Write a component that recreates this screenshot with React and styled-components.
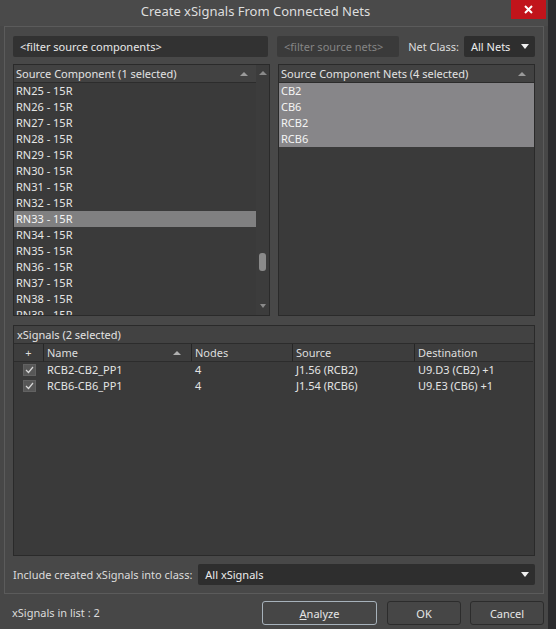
import React from 'react';
import styled, { createGlobalStyle } from 'styled-components';

const GlobalStyle = createGlobalStyle`
  html, body {
    margin: 0;
    padding: 0;
    background: #2b2b2d;
  }
  body {
    font-family: "Noto Sans", "Open Sans", sans-serif;
    font-size: 11px;
    color: #e4e4e4;
  }
  * { box-sizing: border-box; }
`;

const Window = styled.div`
  width: 548px;
  height: 629px;
  background: #474747;
  display: flex;
  flex-direction: column;
`;

const TitleBar = styled.div`
  height: 26px;
  display: flex;
  align-items: flex-start;
  background: #4a4a4a;
`;

const Title = styled.div`
  flex: 1;
  text-align: center;
  font-size: 13px;
  line-height: 23px;
  color: #dedede;
`;

const CloseButton = styled.div`
  width: 35px;
  height: 19px;
  margin-right: 2px;
  background: #c1141b;
  display: flex;
  align-items: center;
  justify-content: center;
`;

const Body = styled.div`
  margin: 0 4px;
  border: 1px solid #5b5b5b;
  background: #484848;
  padding: 9px 8px 8px 8px;
  display: flex;
  flex-direction: column;
`;

const FilterRow = styled.div`
  height: 21px;
  display: flex;
  align-items: center;
`;

const Input = styled.div`
  height: 21px;
  width: ${p => p.w}px;
  margin-right: ${p => p.mr || 0}px;
  background: ${p => p.dim ? '#3a3a3a' : '#323232'};
  color: ${p => p.dim ? '#858585' : '#e8e8e8'};
  border-radius: 2px;
  padding: 0 7px;
  line-height: 21px;
  white-space: nowrap;
`;

const Label = styled.span`
  color: #dcdcdc;
  white-space: nowrap;
  margin-right: ${p => p.mr || 0}px;
`;

const Select = styled.div`
  height: 21px;
  width: ${p => p.w ? `${p.w}px` : 'auto'};
  flex: ${p => p.w ? 'none' : 1};
  background: #2e2e2e;
  border-radius: 2px;
  display: flex;
  align-items: center;
  padding: 0 6px 0 7px;
  color: #ececec;
  span { flex: 1; }
`;

const DownTriangle = styled.i`
  width: 0;
  height: 0;
  border-left: 4px solid transparent;
  border-right: 4px solid transparent;
  border-top: 5px solid #f0f0f0;
`;

const UpTriangle = styled.i`
  width: 0;
  height: 0;
  margin-top: ${p => p.mt || 0}px;
  border-left: 4px solid transparent;
  border-right: 4px solid transparent;
  border-bottom: 4px solid ${p => p.c || '#9a9a9a'};
`;

const ListsGrid = styled.div`
  margin-top: 7px;
  height: 252px;
  display: grid;
  grid-template-columns: 1fr 1fr;
  gap: 8px;
`;

const ListPanel = styled.div`
  border: 1px solid #2a2a2a;
  background: #3a3a3a;
  display: flex;
  overflow: hidden;
`;

const ListMain = styled.div`
  flex: 1;
  display: flex;
  flex-direction: column;
  min-width: 0;
`;

const ListHeader = styled.div`
  height: 18px;
  flex: none;
  background: #424242;
  border-bottom: 1px solid #2c2c2c;
  display: flex;
  align-items: center;
  padding: 0 8px 0 2px;
  color: #e2e2e2;
  span { flex: 1; }
`;

const Row = styled.div`
  height: 16px;
  flex: none;
  line-height: 16px;
  padding-left: 2px;
  background: ${p => p.selected ? p.hl || '#808081' : 'transparent'};
  color: ${p => p.selected ? '#f4f4f4' : '#e6e6e6'};
  white-space: nowrap;
`;

const Scrollbar = styled.div`
  width: 13px;
  flex: none;
  background: #3c3c3c;
  display: flex;
  flex-direction: column;
  align-items: center;
`;

const Thumb = styled.div`
  width: 7px;
  height: 18px;
  border-radius: 3px;
  background: #8a8a8a;
  margin-top: ${p => p.top}px;
`;

const ScrollDown = styled.i`
  margin-top: auto;
  margin-bottom: 7px;
  width: 0;
  height: 0;
  border-left: 3px solid transparent;
  border-right: 3px solid transparent;
  border-top: 4px solid #8a8a8a;
`;

const SignalsPanel = styled.div`
  margin-top: 9px;
  height: 231px;
  border: 1px solid #2a2a2a;
  background: #3a3a3a;
  display: flex;
  flex-direction: column;
`;

const PanelHeader = styled.div`
  height: 18px;
  background: #424242;
  border-bottom: 1px solid #2c2c2c;
  line-height: 17px;
  padding-left: 3px;
  color: #e2e2e2;
`;

const TableGrid = styled.div`
  display: grid;
  grid-template-columns: 29px 148px 101px 122px 119px;
  align-items: center;
`;

const HeadCell = styled.div`
  height: 18px;
  border-bottom: 1px solid #2c2c2c;
  background: #3d3d3d;
  border-left: ${p => p.first ? 'none' : '1px solid #262626'};
  display: flex;
  align-items: center;
  justify-content: ${p => p.center ? 'center' : 'flex-start'};
  padding: ${p => p.center ? '0' : '0 10px 0 3px'};
  color: #dedede;
  span { flex: 1; }
`;

const Cell = styled.div`
  height: 16px;
  line-height: 16px;
  padding-left: ${p => p.check ? 0 : 4}px;
  display: flex;
  align-items: center;
  justify-content: ${p => p.check ? 'center' : 'flex-start'};
  color: #e4e4e4;
  white-space: nowrap;
`;

const CheckBox = styled.div`
  width: 13px;
  height: 12px;
  background: #575757;
  border: 1px solid #626262;
  display: flex;
  align-items: center;
  justify-content: center;
  margin-left: 1px;
`;

const IncludeRow = styled.div`
  margin-top: 7px;
  height: 22px;
  display: flex;
  align-items: center;
`;

const Footer = styled.div`
  flex: 1;
  display: flex;
  align-items: flex-start;
  padding: 7px 4px 0 12px;
`;

const Status = styled.div`
  flex: 1;
  line-height: 24px;
  color: #dcdcdc;
`;

const Button = styled.div`
  width: ${p => p.w}px;
  height: 24px;
  margin-left: ${p => p.ml || 0}px;
  border: 1px solid ${p => p.primary ? '#a7b2bb' : '#2c2c2c'};
  border-radius: 3px;
  background: #464646;
  display: flex;
  align-items: center;
  justify-content: center;
  color: #e6e6e6;
  u { text-decoration: underline; }
`;

const components = Array.from({ length: 15 }, (_, i) => `RN${25 + i} - 15R`);
const nets = ['CB2', 'CB6', 'RCB2', 'RCB6'];
const signals = [
  { name: 'RCB2-CB2_PP1', nodes: 4, source: 'J1.56 (RCB2)', dest: 'U9.D3 (CB2) +1' },
  { name: 'RCB6-CB6_PP1', nodes: 4, source: 'J1.54 (RCB6)', dest: 'U9.E3 (CB6) +1' },
];

const Check = () => (
  <svg width="9" height="8" viewBox="0 0 9 8">
    <path d="M1 4 L3.5 6.5 L8 1" fill="none" stroke="#d8d8d8" strokeWidth="1.2" />
  </svg>
);

export default function App() {
  return (
    <>
      <GlobalStyle />
      <Window>
        <TitleBar>
          <Title>Create xSignals From Connected Nets</Title>
          <CloseButton>
            <svg width="9" height="9" viewBox="0 0 9 9">
              <path d="M1 1 L8 8 M8 1 L1 8" stroke="#fff" strokeWidth="2" />
            </svg>
          </CloseButton>
        </TitleBar>
        <Body>
          <FilterRow>
            <Input w={257} mr={9}>&lt;filter source components&gt;</Input>
            <Input w={123} mr={9} dim>&lt;filter source nets&gt;</Input>
            <Label mr={5}>Net Class:</Label>
            <Select w={71}>
              <span>All Nets</span>
              <DownTriangle />
            </Select>
          </FilterRow>

          <ListsGrid>
            <ListPanel>
              <ListMain>
                <ListHeader>
                  <span>Source Component (1 selected)</span>
                  <UpTriangle />
                </ListHeader>
                {components.map(c => (
                  <Row key={c} selected={c.startsWith('RN33')}>{c}</Row>
                ))}
              </ListMain>
              <Scrollbar>
                <UpTriangle c="#8a8a8a" mt={6} />
                <Thumb top={178} />
                <ScrollDown />
              </Scrollbar>
            </ListPanel>
            <ListPanel>
              <ListMain>
                <ListHeader>
                  <span>Source Component Nets (4 selected)</span>
                  <UpTriangle />
                </ListHeader>
                {nets.map(n => (
                  <Row key={n} selected hl="#878689">{n}</Row>
                ))}
              </ListMain>
            </ListPanel>
          </ListsGrid>

          <SignalsPanel>
            <PanelHeader>xSignals (2 selected)</PanelHeader>
            <TableGrid>
              <HeadCell first center>+</HeadCell>
              <HeadCell><span>Name</span><UpTriangle c="#b0b0b0" /></HeadCell>
              <HeadCell>Nodes</HeadCell>
              <HeadCell>Source</HeadCell>
              <HeadCell>Destination</HeadCell>
              {signals.map(s => (
                <React.Fragment key={s.name}>
                  <Cell check><CheckBox><Check /></CheckBox></Cell>
                  <Cell>{s.name}</Cell>
                  <Cell>{s.nodes}</Cell>
                  <Cell>{s.source}</Cell>
                  <Cell>{s.dest}</Cell>
                </React.Fragment>
              ))}
            </TableGrid>
          </SignalsPanel>

          <IncludeRow>
            <Label mr={6}>Include created xSignals into class:</Label>
            <Select>
              <span>All xSignals</span>
              <DownTriangle />
            </Select>
          </IncludeRow>
        </Body>
        <Footer>
          <Status>xSignals in list : 2</Status>
          <Button w={115} primary><span><u>A</u>nalyze</span></Button>
          <Button w={74} ml={10}>OK</Button>
          <Button w={74} ml={9}>Cancel</Button>
        </Footer>
      </Window>
    </>
  );
}
